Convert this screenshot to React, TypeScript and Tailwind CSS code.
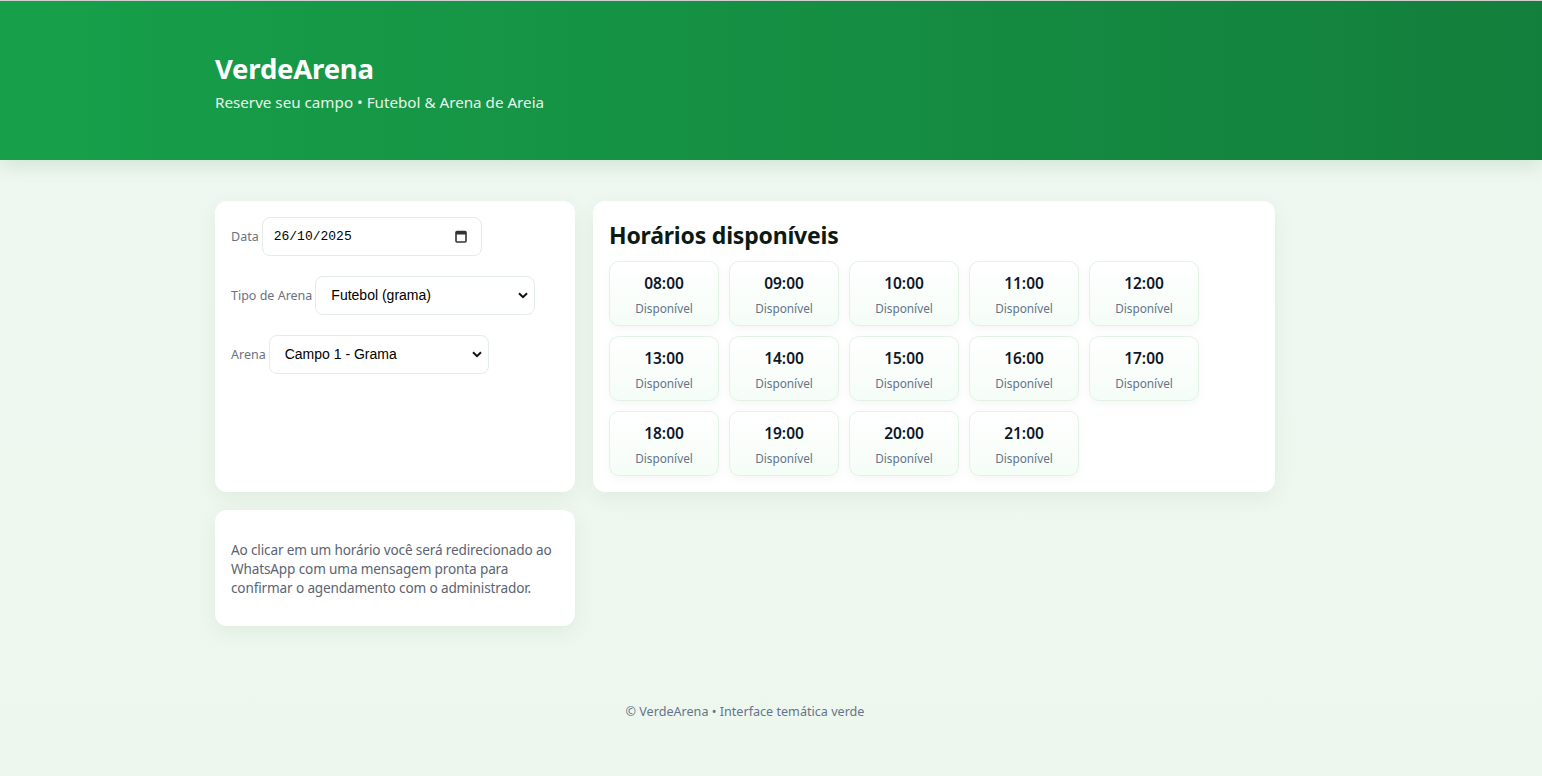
import React from "react";

const slots = [
  "08:00","09:00","10:00","11:00","12:00",
  "13:00","14:00","15:00","16:00","17:00",
  "18:00","19:00","20:00","21:00",
];

const font = { fontFamily: '"Noto Sans", "Open Sans", sans-serif' };

export default function App() {
  return (
    <div className="min-h-[776px] bg-gradient-to-b from-[#eef8f0] to-[#eef7ee] border-t border-[#d4d4d4]" style={font}>
      <header className="h-[159px] bg-gradient-to-r from-[#17a04a] to-[#137f3c] shadow-[0_6px_18px_rgba(20,90,40,0.12)]">
        <div className="w-[1060px] ml-[215px] pt-[51px]">
          <h1 className="text-[27.5px] leading-[34px] font-bold text-white tracking-[-0.2px]">VerdeArena</h1>
          <p className="mt-[6px] text-[15.2px] leading-[20px] text-[#e6f5ea]">Reserve seu campo • Futebol &amp; Arena de Areia</p>
        </div>
      </header>

      <main className="w-[1060px] ml-[215px] pt-[41px]">
        <div className="flex gap-[18px] items-start">
          <div className="w-[360px] flex flex-col gap-[18px]">
            <section className="h-[291px] bg-white rounded-[12px] shadow-[0_6px_20px_rgba(30,80,40,0.07)] p-4 flex flex-col gap-[20px]">
              <label className="flex items-center gap-[3px] text-[12.5px] text-[#6b7280]">
                <span className="pt-[2px]">Data</span>
                <div className="w-[220px] h-[39px] border border-[#e3ece6] rounded-[8px] flex items-center justify-between pl-[11px] pr-[14px]">
                  <span className="text-[13px] text-black" style={{ fontFamily: '"Liberation Mono", monospace' }}>26/10/2025</span>
                  <svg width="12" height="13" viewBox="0 0 12 13">
                    <rect x="1" y="1.5" width="10" height="10.5" rx="1" fill="none" stroke="#333" strokeWidth="1.6" />
                    <rect x="1" y="1.5" width="10" height="3" fill="#333" />
                  </svg>
                </div>
              </label>
              <label className="flex items-center gap-[3px] text-[12.5px] text-[#6b7280]">
                <span className="pt-[2px]">Tipo de Arena</span>
                <div className="w-[220px] h-[39px] border border-[#e3ece6] rounded-[8px] flex items-center justify-between pl-[15px] pr-[6px]">
                  <span className="text-[14px] text-black" style={{ fontFamily: '"Liberation Sans", Arial, sans-serif' }}>Futebol (grama)</span>
                  <svg width="10" height="7" viewBox="0 0 10 7"><path d="M1 1.2 L5 5.2 L9 1.2" fill="none" stroke="#111" strokeWidth="2" /></svg>
                </div>
              </label>
              <label className="flex items-center gap-[3px] text-[12.5px] text-[#6b7280]">
                <span className="pt-[2px]">Arena</span>
                <div className="w-[220px] h-[39px] border border-[#e3ece6] rounded-[8px] flex items-center justify-between pl-[15px] pr-[6px]">
                  <span className="text-[14px] text-black" style={{ fontFamily: '"Liberation Sans", Arial, sans-serif' }}>Campo 1 - Grama</span>
                  <svg width="10" height="7" viewBox="0 0 10 7"><path d="M1 1.2 L5 5.2 L9 1.2" fill="none" stroke="#111" strokeWidth="2" /></svg>
                </div>
              </label>
            </section>

            <section className="bg-white rounded-[12px] shadow-[0_6px_20px_rgba(30,80,40,0.07)] px-4 pt-[30px] pb-[29px]">
              <p className="text-[13.6px] leading-[19px] tracking-[-0.15px] text-[#5b6472]">
                Ao clicar em um horário você será redirecionado ao WhatsApp com uma mensagem pronta para confirmar o agendamento com o administrador.
              </p>
            </section>
          </div>

          <section className="w-[682px] h-[291px] bg-white rounded-[12px] shadow-[0_6px_20px_rgba(30,80,40,0.07)] px-4 pt-[18px]">
            <h2 className="text-[23px] leading-[32px] font-bold text-[#0b1a14] tracking-[-0.2px]">Horários disponíveis</h2>
            <div className="mt-[10px] grid grid-cols-[repeat(5,110px)] gap-[10px]">
              {slots.map((s) => (
                <div key={s} className="h-[65px] rounded-[10px] border border-[#e2f3e6] bg-gradient-to-b from-white to-[#f5fdf7] shadow-[0_3px_8px_rgba(30,80,40,0.05)] flex flex-col items-center pt-[11px]">
                  <div className="text-[15.5px] leading-[20px] font-semibold text-[#0f172a]">{s}</div>
                  <div className="mt-[7px] text-[11.8px] leading-[16px] text-[#64748b]">Disponível</div>
                </div>
              ))}
            </div>
          </section>
        </div>

        <footer className="pt-[77px] text-center text-[12.6px] text-[#64748b]">
          © VerdeArena • Interface temática verde
        </footer>
      </main>
    </div>
  );
}
